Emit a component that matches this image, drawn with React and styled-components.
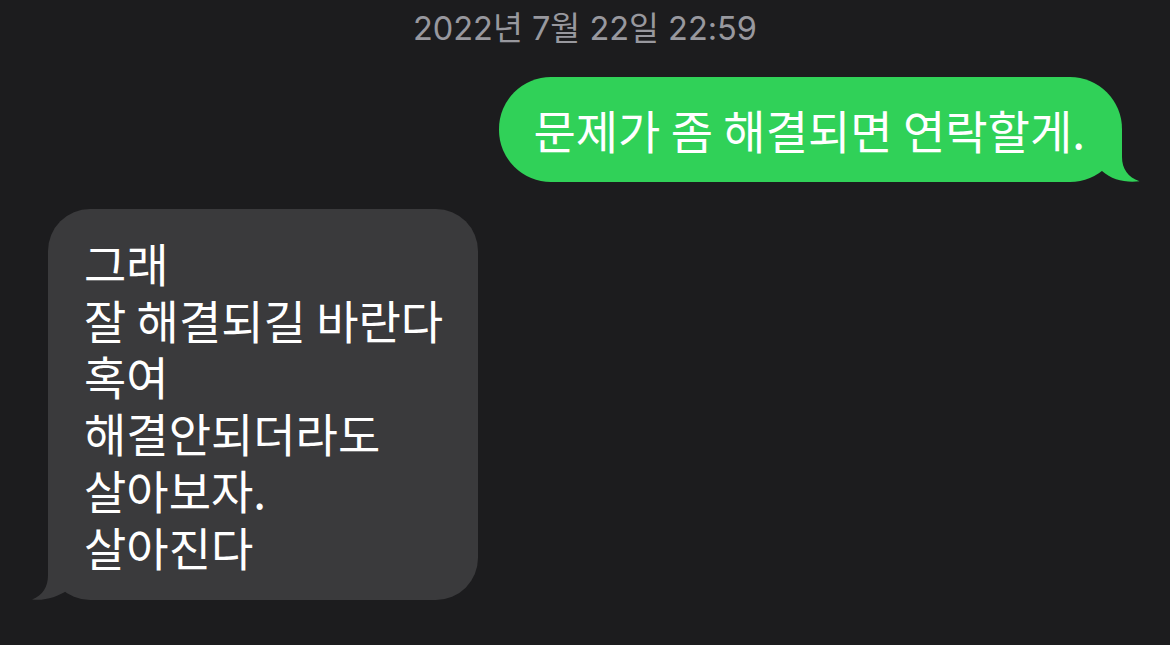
import React from "react";
import styled, { createGlobalStyle } from "styled-components";

const GlobalStyle = createGlobalStyle`
  html, body {
    margin: 0;
    padding: 0;
    background: #1c1c1e;
  }
  body {
    font-family: "Noto Sans CJK KR", "Noto Sans", sans-serif;
    -webkit-font-smoothing: antialiased;
  }
`;

const Screen = styled.div`
  width: 1170px;
  height: 645px;
  background: #1c1c1e;
  display: flex;
  flex-direction: column;
  overflow: hidden;
`;

const Timestamp = styled.div`
  padding-top: 9px;
  height: 40px;
  line-height: 40px;
  text-align: center;
  font-family: Inter, "Noto Sans CJK KR", sans-serif;
  font-size: 32.5px;
  color: #98989e;
`;

const Row = styled.div`
  display: flex;
  justify-content: ${(p) => (p.$sent ? "flex-end" : "flex-start")};
  padding: 0 48px;
  margin-top: ${(p) => p.$gap}px;
`;

const Bubble = styled.div`
  position: relative;
  background: ${(p) => (p.$sent ? "#30d158" : "#3a3a3c")};
  color: #ffffff;
  font-size: 46px;
  line-height: 56.8px;
  padding: ${(p) => (p.$sent ? "24px 37px 24px 34px" : "25px 35px 25px 36px")};
  border-radius: ${(p) => (p.$sent ? "52px" : "42px")};
  white-space: pre-line;
`;

const Tail = styled.svg`
  position: absolute;
  bottom: 0;
  ${(p) => (p.$sent ? "right: -18px;" : "left: -16px;")}
  overflow: visible;
`;

function SentTail() {
  return (
    <Tail $sent width="38" height="52" viewBox="0 0 38 52">
      <path
        d="M20,0 L20,27 C20,39 26,47 37.5,51.3 C24,53 10,50 0,41 L0,0 Z"
        fill="#30d158"
      />
    </Tail>
  );
}

function ReceivedTail() {
  return (
    <Tail width="40" height="50" viewBox="0 0 40 50">
      <path
        d="M16,0 L16,25 C16,37 11,45 0,49.5 C13,51 25,47 36,40 L40,40 L40,0 Z"
        fill="#3a3a3c"
      />
    </Tail>
  );
}

export default function App() {
  return (
    <>
      <GlobalStyle />
      <Screen>
        <Timestamp>2022년 7월 22일 22:59</Timestamp>
        <Row $sent $gap={28}>
          <Bubble $sent>
            문제가 좀 해결되면 연락할게.
            <SentTail />
          </Bubble>
        </Row>
        <Row $gap={27}>
          <Bubble>
            {"그래\n잘 해결되길 바란다\n혹여\n해결안되더라도\n살아보자.\n살아진다"}
            <ReceivedTail />
          </Bubble>
        </Row>
      </Screen>
    </>
  );
}
